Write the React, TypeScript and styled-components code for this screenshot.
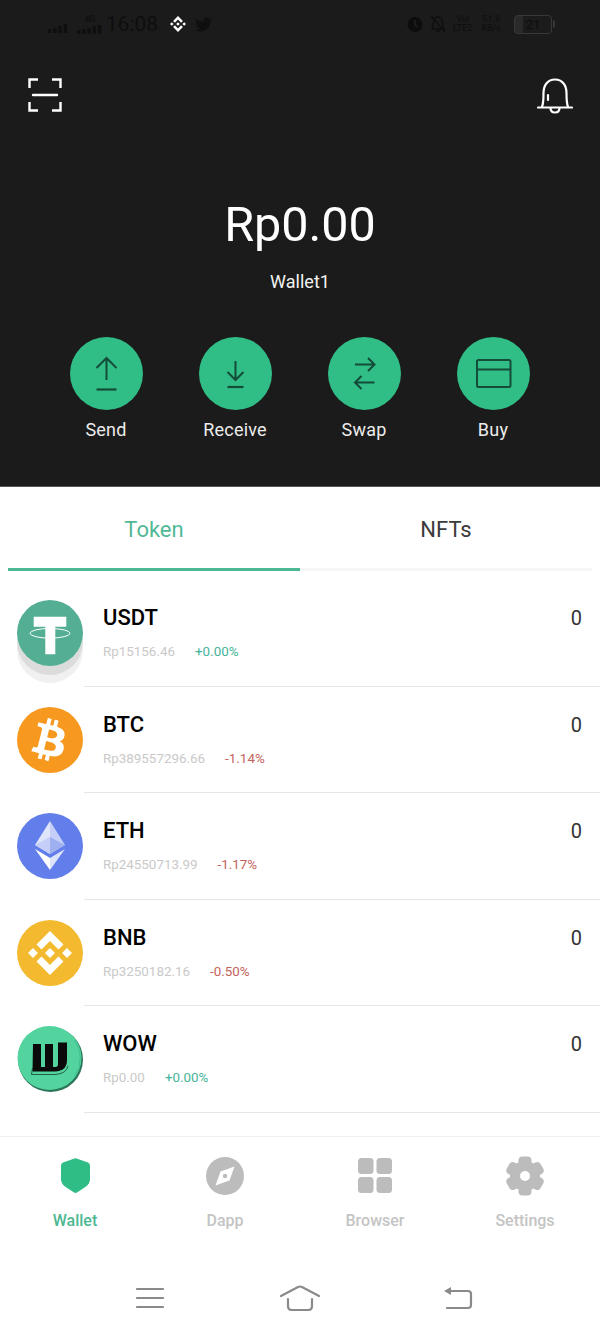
import React from "react";
import styled, { createGlobalStyle } from "styled-components";
import { FaBtc, FaTwitter } from "react-icons/fa";
import { SiBinance } from "react-icons/si";

const Global = createGlobalStyle`
  html, body { margin: 0; padding: 0; background: #fff; }
  body { font-family: Roboto, "Liberation Sans", sans-serif; }
  * { box-sizing: border-box; }
`;

const Page = styled.div`
  width: 600px;
  height: 1333px;
  display: flex;
  flex-direction: column;
  overflow: hidden;
  background: #fff;
`;
const Header = styled.header`
  height: 487px;
  flex: none;
  background: #1b1b1b;
  border-bottom: 1px solid #555;
  display: flex;
  flex-direction: column;
  align-items: stretch;
`;
const StatusBar = styled.div`
  height: 48px;
  padding: 0 48px;
  display: flex;
  align-items: center;
  justify-content: space-between;
  color: #0f0f0f;
`;
const StatusGroup = styled.div<{ $gap: number; $offset?: number }>`
  display: flex;
  align-items: center;
  gap: ${(p) => p.$gap}px;
  margin-left: ${(p) => p.$offset ?? 0}px;
`;
const SignalSlot = styled.span`
  display: flex;
  margin-top: 8px;
  margin-right: 5px;
`;
const Time = styled.span`
  font-size: 21px;
  line-height: 26px;
  color: #0e0e0e;
`;
const TinyStack = styled.span<{ $left?: number; $right?: number }>`
  display: flex;
  flex-direction: column;
  align-items: center;
  font-size: 9px;
  line-height: 9px;
  font-weight: 500;
  color: #101010;
  margin-left: ${(p) => p.$left ?? 0}px;
  margin-right: ${(p) => p.$right ?? 0}px;
`;
const Battery = styled.span`
  width: 38px;
  height: 19px;
  border: 1.5px solid #383838;
  border-radius: 4px;
  display: flex;
  align-items: center;
  justify-content: center;
  font-size: 13px;
  color: #0c0c0c;
  background: linear-gradient(90deg, #2a2a2a 22%, transparent 22%);
  position: relative;
  &::after {
    content: "";
    position: absolute;
    right: -4px;
    top: 4px;
    width: 2px;
    height: 8px;
    background: #383838;
    border-radius: 0 2px 2px 0;
  }
`;
const TopBar = styled.div`
  margin-top: 30px;
  height: 35px;
  padding: 0 27px 0 28px;
  display: flex;
  justify-content: space-between;
  align-items: flex-start;
`;
const Balance = styled.div`
  margin-top: 85px;
  text-align: center;
  color: #fff;
  font-size: 48.5px;
  line-height: 54px;
`;
const WalletName = styled.div`
  margin-top: 18px;
  text-align: center;
  color: #f2f2f2;
  font-size: 18px;
  line-height: 24px;
`;
const Actions = styled.div`
  margin-top: 43px;
  padding: 0 41.5px;
  display: grid;
  grid-template-columns: repeat(4, 129px);
`;
const Action = styled.div`
  display: flex;
  flex-direction: column;
  align-items: center;
  gap: 8px;
`;
const ActionCircle = styled.div`
  width: 73px;
  height: 73px;
  border-radius: 50%;
  background: #31bd86;
  display: flex;
  align-items: center;
  justify-content: center;
`;
const ActionLabel = styled.span`
  color: #ececec;
  font-size: 18px;
  line-height: 24px;
  letter-spacing: 0.2px;
`;
const Tabs = styled.div`
  height: 84px;
  flex: none;
  padding: 0 8px;
  display: grid;
  grid-template-columns: 1fr 1fr;
`;
const Tab = styled.div<{ $active?: boolean }>`
  border-bottom: 3px solid ${(p) => (p.$active ? "#4cb892" : "#f6f6f6")};
  color: ${(p) => (p.$active ? "#52b996" : "#3a3a3a")};
  font-size: 22px;
  line-height: 26px;
  text-align: center;
  padding-top: 30px;
`;
const List = styled.div`
  padding-top: 9px;
  flex: none;
`;
const Row = styled.div`
  height: 106.6px;
  padding-left: 17px;
  display: flex;
  align-items: stretch;
`;
const CoinWrap = styled.div<{ $stack?: boolean }>`
  width: 66px;
  height: 66px;
  margin-top: 20px;
  flex: none;
  border-radius: 50%;
  box-shadow: ${(p) => (p.$stack ? "0 9px 0 #dcdcdc, 0 17px 0 #f0f0f0" : "none")};
`;
const RowBody = styled.div`
  flex: 1;
  margin-left: 1px;
  padding: 25px 18px 0 19px;
  border-bottom: 1px solid #e6e6e6;
  display: flex;
  justify-content: space-between;
  align-items: flex-start;
`;
const Name = styled.div`
  font-size: 22px;
  line-height: 26px;
  font-weight: 500;
  color: #000;
`;
const SubLine = styled.div`
  margin-top: 12px;
  display: flex;
  gap: 20px;
  font-size: 13.4px;
  line-height: 18px;
`;
const Price = styled.span`
  color: #c9c9c9;
`;
const Change = styled.span<{ $up: boolean }>`
  color: ${(p) => (p.$up ? "#45b49a" : "#c4625c")};
`;
const Amount = styled.div`
  font-size: 20px;
  line-height: 26px;
  color: #333;
`;
const BottomNav = styled.nav`
  margin-top: 23px;
  border-top: 1px solid #f0f0f0;
  padding-top: 19px;
  display: grid;
  grid-template-columns: repeat(4, 150px);
  flex: none;
`;
const NavItem = styled.div<{ $active?: boolean }>`
  display: flex;
  flex-direction: column;
  align-items: center;
  font-size: 16px;
  line-height: 20px;
  font-weight: 500;
  color: ${(p) => (p.$active ? "#4cb892" : "#c4c4c4")};
`;
const NavIconBox = styled.div`
  height: 40px;
  margin-bottom: 15px;
  display: flex;
  align-items: center;
  justify-content: center;
`;
const SysBar = styled.div`
  margin-top: 54px;
  padding-left: 136px;
  display: flex;
  align-items: center;
  gap: 116px;
  color: #8a8a8a;
`;
const BackSlot = styled.span`
  margin-left: 7px;
  display: flex;
`;

const Signal = ({ heights }: { heights: number[] }) => (
  <svg width={heights.length * 5.2} height="10" viewBox={`0 0 ${heights.length * 5.2} 10`}>
    {heights.map((h, i) => (
      <rect key={i} x={i * 5.2} y={10 - h} width="3.400" height={h} fill="#0f0f0f" />
    ))}
  </svg>
);

const ScanIcon = () => (
  <svg width="34" height="34" viewBox="0 0 34 34" fill="none" stroke="#fff" strokeWidth="2.4">
    <path d="M1.5 10V1.5H10M24 1.5H32.5V10M1.5 24V32.5H10M24 32.5H32.5V24" />
    <path d="M5 17H29" strokeLinecap="round" />
  </svg>
);

const BellIcon = () => (
  <svg width="36" height="36" viewBox="0 0 36 36" fill="none" stroke="#fff" strokeWidth="2.2" strokeLinecap="round">
    <path d="M5 29C6.5 25 6.5 21 6.5 15C6.5 7 11 1.5 18 1.5C25 1.5 29.5 7 29.5 15C29.5 21 29.5 25 31 29" />
    <path d="M1 29.5H35" />
    <path d="M13.5 30C13.5 33 15.5 34.5 18 34.5C20.5 34.5 22.5 33 22.5 30" />
    <path d="M11 17V22" />
  </svg>
);

const ink = "#134c38";
const SendIcon = () => (
  <svg width="73" height="73" viewBox="0 0 73 73" fill="none" stroke={ink} strokeWidth="2">
    <path d="M36.5 21V43M26.500 31L36.500 21L46.500 31" />
    <path d="M26.500 52.500H46.500" strokeWidth="2.200" />
  </svg>
);
const ReceiveIcon = () => (
  <svg width="73" height="73" viewBox="0 0 73 73" fill="none" stroke={ink} strokeWidth="2">
    <path d="M36.500 24V43M28.500 35L36.500 43L44.500 35" />
    <path d="M28.500 50H44.500" strokeWidth="2.200" />
  </svg>
);
const SwapIcon = () => (
  <svg width="73" height="73" viewBox="0 0 73 73" fill="none" stroke={ink} strokeWidth="2">
    <path d="M27 27.500H46.500M40 21L46.500 27.500L40 34" />
    <path d="M46.500 45.500H27M33.500 39L27 45.500L33.500 52" />
  </svg>
);
const BuyIcon = () => (
  <svg width="73" height="73" viewBox="0 0 73 73" fill="none" stroke={ink} strokeWidth="2">
    <rect x="20" y="23" width="33.500" height="27" rx="1.500" />
    <path d="M20 32.500H53.500" />
  </svg>
);

const TetherCoin = () => (
  <svg width="66" height="66" viewBox="0 0 66 66">
    <circle cx="33" cy="33" r="33" fill="#53ae94" />
    <path d="M16.700 16.700H49.300V26.700H38.300V54.300H28.300V26.700H16.700Z" fill="#fff" />
    <ellipse cx="33" cy="33.300" rx="20" ry="4.800" fill="none" stroke="#fff" strokeWidth="1" />
  </svg>
);
const BtcCoin = () => (
  <svg width="66" height="66" viewBox="0 0 66 66">
    <circle cx="33" cy="33" r="33" fill="#f7981f" />
    <g transform="rotate(14 33 33) translate(12 12) scale(0.082)">
      <FaBtc color="#fff" size={512} />
    </g>
  </svg>
);
const EthCoin = () => (
  <svg width="66" height="66" viewBox="0 0 66 66">
    <circle cx="33" cy="33" r="33" fill="#627eea" />
    <path d="M33 8L18 32L33 41Z" fill="#dfe5fb" />
    <path d="M33 8L48 32L33 41Z" fill="#c5cff7" />
    <path d="M33 24L18 32L33 41Z" fill="#c4cef6" />
    <path d="M33 24L48 32L33 41Z" fill="#9fb0f0" />
    <path d="M18 36L33 57V45Z" fill="#fff" />
    <path d="M48 36L33 57V45Z" fill="#dde3fb" />
  </svg>
);
const BnbCoin = () => (
  <svg width="66" height="66" viewBox="0 0 66 66">
    <circle cx="33" cy="33" r="33" fill="#f3ba2f" />
    <g transform="translate(11 11)">
      <SiBinance color="#fff" size={44} />
    </g>
  </svg>
);
const WowCoin = () => (
  <svg width="66" height="66" viewBox="0 0 66 66">
    <circle cx="33.500" cy="33.500" r="32.500" fill="#2a7458" />
    <circle cx="32.500" cy="32" r="32" fill="#53d49f" />
    <path d="M57 14A31 31 0 0 1 58 50" fill="none" stroke="#3fbd8a" strokeWidth="1" />
    <path d="M16 18H24V41H28V18H36V41H38.500Q41 41 41 38V16.500H50V34Q50 45 38 45.500H15.500Z" fill="#0a0a0a" />
    <path d="M14.500 48.500L15.500 42M14.500 48.500H38Q49 48 51 40" fill="none" stroke="#14402f" strokeWidth="0.800" />
  </svg>
);

const ShieldIcon = () => (
  <svg width="29" height="35" viewBox="0 0 29 35">
    <path d="M13.500 .5Q14.500 0 15.500 .5L27 4.500Q29 5.500 29 7.500V21Q29 25.500 25 28.500L16 34.500Q14.500 35.300 13 34.500L4 28.500Q0 25.500 0 21V7.500Q0 5.500 2 4.500Z" fill="#2fbd85" />
  </svg>
);
const CompassIcon = () => (
  <svg width="38" height="38" viewBox="0 0 38 38">
    <circle cx="19" cy="19" r="19" fill="#bcbcbc" />
    <path d="M28.500 9.500L23.500 23.500L9.500 28.500L14.500 14.500Z" fill="#fff" />
    <circle cx="19" cy="19" r="2.200" fill="#bcbcbc" />
  </svg>
);
const GridIcon = () => (
  <svg width="34" height="35" viewBox="0 0 34 35" fill="#bcbcbc">
    <rect x="0" y="0" width="15.500" height="16" rx="3.500" />
    <rect x="18.500" y="0" width="15.500" height="16" rx="3.500" />
    <rect x="0" y="19" width="15.500" height="16" rx="3.500" />
    <rect x="18.500" y="19" width="15.500" height="16" rx="3.500" />
  </svg>
);
const GearIcon = () => (
  <svg width="40" height="40" viewBox="0 0 40 40" fill="#bcbcbc">
    <circle cx="20" cy="20" r="15" />
    {[0, 60, 120, 180, 240, 300].map((a) => (
      <rect key={a} x="13.500" y="0.500" width="13" height="12" rx="4" transform={`rotate(${a} 20 20)`} />
    ))}
    <circle cx="20" cy="20" r="5" fill="#fff" />
  </svg>
);

const MenuIcon = () => (
  <svg width="28" height="22" viewBox="0 0 28 22" stroke="currentColor" strokeWidth="2.200" strokeLinecap="round">
    <path d="M1 2H27M1 11H27M1 20H27" />
  </svg>
);
const HomeIcon = () => (
  <svg width="40" height="26" viewBox="0 0 40 26" fill="none" stroke="currentColor" strokeWidth="2.200" strokeLinecap="round">
    <path d="M1 11L18 2Q20 1 22 2L39 11" />
    <path d="M8 14V21Q8 25 12 25H28Q32 25 32 21V14" />
  </svg>
);
const BackIcon = () => (
  <svg width="30" height="24" viewBox="0 0 30 24" fill="none" stroke="currentColor" strokeWidth="2.200" strokeLinecap="round">
    <path d="M4 22H25Q28 22 28 19V8Q28 5 25 5H6" />
    <path d="M8 1V9L1 5Z" fill="currentColor" stroke="none" />
  </svg>
);

const actions = [
  { label: "Send", Icon: SendIcon },
  { label: "Receive", Icon: ReceiveIcon },
  { label: "Swap", Icon: SwapIcon },
  { label: "Buy", Icon: BuyIcon },
];
const tokens = [
  { name: "USDT", price: "Rp15156.46", change: "+0.00%", up: true, Coin: TetherCoin, stack: true },
  { name: "BTC", price: "Rp389557296.66", change: "-1.14%", up: false, Coin: BtcCoin },
  { name: "ETH", price: "Rp24550713.99", change: "-1.17%", up: false, Coin: EthCoin },
  { name: "BNB", price: "Rp3250182.16", change: "-0.50%", up: false, Coin: BnbCoin },
  { name: "WOW", price: "Rp0.00", change: "+0.00%", up: true, Coin: WowCoin },
];
const navs = [
  { label: "Wallet", Icon: ShieldIcon, active: true },
  { label: "Dapp", Icon: CompassIcon },
  { label: "Browser", Icon: GridIcon },
  { label: "Settings", Icon: GearIcon },
];

export default function App() {
  return (
    <Page>
      <Global />
      <Header>
        <StatusBar>
          <StatusGroup $gap={3}>
            <SignalSlot>
              <Signal heights={[4, 5, 7, 9]} />
            </SignalSlot>
            <TinyStack>
              4G
              <Signal heights={[4, 5, 6, 8, 9]} />
            </TinyStack>
            <Time>16:08</Time>
            <StatusGroup $gap={9} $offset={9}>
              <SiBinance color="#fff" size={16} />
              <FaTwitter color="#0f0f0f" size={17} />
            </StatusGroup>
          </StatusGroup>
          <StatusGroup $gap={7}>
            <svg width="16" height="16" viewBox="0 0 16 16" fill="#0d0d0d">
              <circle cx="8" cy="8.500" r="7.500" />
              <path d="M8 4V9L11 11" stroke="#2a2a2a" strokeWidth="1" fill="none" />
            </svg>
            <svg width="16" height="18" viewBox="0 0 16 18" fill="none" stroke="#0f0f0f" strokeWidth="1.400">
              <path d="M2 14C3.500 12 3.500 10 3.500 7C3.500 4 5.500 2 8 2C10.500 2 12.500 4 12.500 7C12.500 10 12.500 12 14 14H2ZM6.500 16H9.500M1 1L15 17" />
            </svg>
            <TinyStack>
              <span>VoI</span>
              <span>LTE2</span>
            </TinyStack>
            <TinyStack $left={2} $right={6}>
              <span>51.6</span>
              <span>KB/s</span>
            </TinyStack>
            <Battery>21</Battery>
          </StatusGroup>
        </StatusBar>
        <TopBar>
          <ScanIcon />
          <BellIcon />
        </TopBar>
        <Balance>Rp0.00</Balance>
        <WalletName>Wallet1</WalletName>
        <Actions>
          {actions.map(({ label, Icon }) => (
            <Action key={label}>
              <ActionCircle>
                <Icon />
              </ActionCircle>
              <ActionLabel>{label}</ActionLabel>
            </Action>
          ))}
        </Actions>
      </Header>
      <Tabs>
        <Tab $active>Token</Tab>
        <Tab>NFTs</Tab>
      </Tabs>
      <List>
        {tokens.map(({ name, price, change, up, Coin, stack }) => (
          <Row key={name}>
            <CoinWrap $stack={stack}>
              <Coin />
            </CoinWrap>
            <RowBody>
              <div>
                <Name>{name}</Name>
                <SubLine>
                  <Price>{price}</Price>
                  <Change $up={up}>{change}</Change>
                </SubLine>
              </div>
              <Amount>0</Amount>
            </RowBody>
          </Row>
        ))}
      </List>
      <BottomNav>
        {navs.map(({ label, Icon, active }) => (
          <NavItem key={label} $active={active}>
            <NavIconBox>
              <Icon />
            </NavIconBox>
            {label}
          </NavItem>
        ))}
      </BottomNav>
      <SysBar>
        <MenuIcon />
        <HomeIcon />
        <BackSlot>
          <BackIcon />
        </BackSlot>
      </SysBar>
    </Page>
  );
}
